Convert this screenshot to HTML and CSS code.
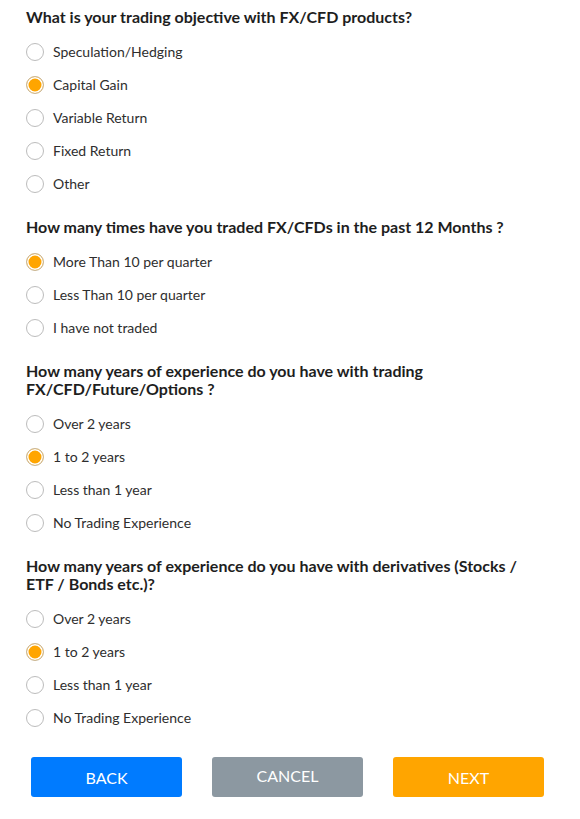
FILE: index.html
```html
<!DOCTYPE html>
<html>
<head>
<meta charset="utf-8">
<link rel="stylesheet" href="styles.css">
</head>
<body>
<form class="quiz">
  <section class="question">
    <h2 class="q-title">What is your trading objective with FX/CFD products?</h2>
    <label class="opt"><span class="radio"></span><span class="opt-text">Speculation/Hedging</span></label>
    <label class="opt"><span class="radio checked"></span><span class="opt-text">Capital Gain</span></label>
    <label class="opt"><span class="radio"></span><span class="opt-text">Variable Return</span></label>
    <label class="opt"><span class="radio"></span><span class="opt-text">Fixed Return</span></label>
    <label class="opt"><span class="radio"></span><span class="opt-text">Other</span></label>
  </section>
  <section class="question">
    <h2 class="q-title">How many times have you traded FX/CFDs in the past 12 Months ?</h2>
    <label class="opt"><span class="radio checked"></span><span class="opt-text">More Than 10 per quarter</span></label>
    <label class="opt"><span class="radio"></span><span class="opt-text">Less Than 10 per quarter</span></label>
    <label class="opt"><span class="radio"></span><span class="opt-text">I have not traded</span></label>
  </section>
  <section class="question">
    <h2 class="q-title">How many years of experience do you have with trading FX/CFD/Future/Options ?</h2>
    <label class="opt"><span class="radio"></span><span class="opt-text">Over 2 years</span></label>
    <label class="opt"><span class="radio checked"></span><span class="opt-text">1 to 2 years</span></label>
    <label class="opt"><span class="radio"></span><span class="opt-text">Less than 1 year</span></label>
    <label class="opt"><span class="radio"></span><span class="opt-text">No Trading Experience</span></label>
  </section>
  <section class="question">
    <h2 class="q-title">How many years of experience do you have with derivatives (Stocks / ETF / Bonds etc.)?</h2>
    <label class="opt"><span class="radio"></span><span class="opt-text">Over 2 years</span></label>
    <label class="opt"><span class="radio checked"></span><span class="opt-text">1 to 2 years</span></label>
    <label class="opt"><span class="radio"></span><span class="opt-text">Less than 1 year</span></label>
    <label class="opt"><span class="radio"></span><span class="opt-text">No Trading Experience</span></label>
  </section>
  <div class="actions">
    <button type="button" class="btn btn-back">BACK</button>
    <button type="button" class="btn btn-cancel">CANCEL</button>
    <button type="button" class="btn btn-next">NEXT</button>
  </div>
</form>
</body>
</html>
```
FILE: styles.css
```css
html, body {
  margin: 0;
  padding: 0;
  background: #ffffff;
}
body {
  font-family: "Lato", "Liberation Sans", sans-serif;
  color: #222222;
}
.quiz {
  padding: 8px 0 0 26px;
  width: 514px;
}
.question {
  margin-bottom: 18px;
}
.q-title {
  margin: 0 0 9px 0;
  font-size: 16px;
  line-height: 18px;
  font-weight: 700;
  color: #1e1e1e;
}
.opt {
  display: flex;
  align-items: center;
  height: 33px;
}
.radio {
  box-sizing: border-box;
  width: 18px;
  height: 18px;
  border: 1px solid #bcbcbc;
  border-radius: 50%;
  margin-right: 9px;
  flex: none;
  background: #fff;
}
.radio.checked {
  border-color: #c9b89a;
  background: #ffa500;
  box-shadow: inset 0 0 0 1.5px #ffffff;
}
.opt-text {
  font-size: 14px;
  color: #2e2e2e;
}
.actions {
  display: flex;
  gap: 30px;
  margin: 23px 0 0 5px;
}
.btn {
  flex: none;
  width: 151px;
  height: 40px;
  border: none;
  border-radius: 3px;
  color: #ffffff;
  font-family: "Lato", "Liberation Sans", sans-serif;
  font-size: 16px;
  padding: 0;
}
.btn-back { background: #007bff; }
.btn-cancel { background: #8c98a1; padding-bottom: 3px; }
.btn-next { background: #ffa500; }
```
